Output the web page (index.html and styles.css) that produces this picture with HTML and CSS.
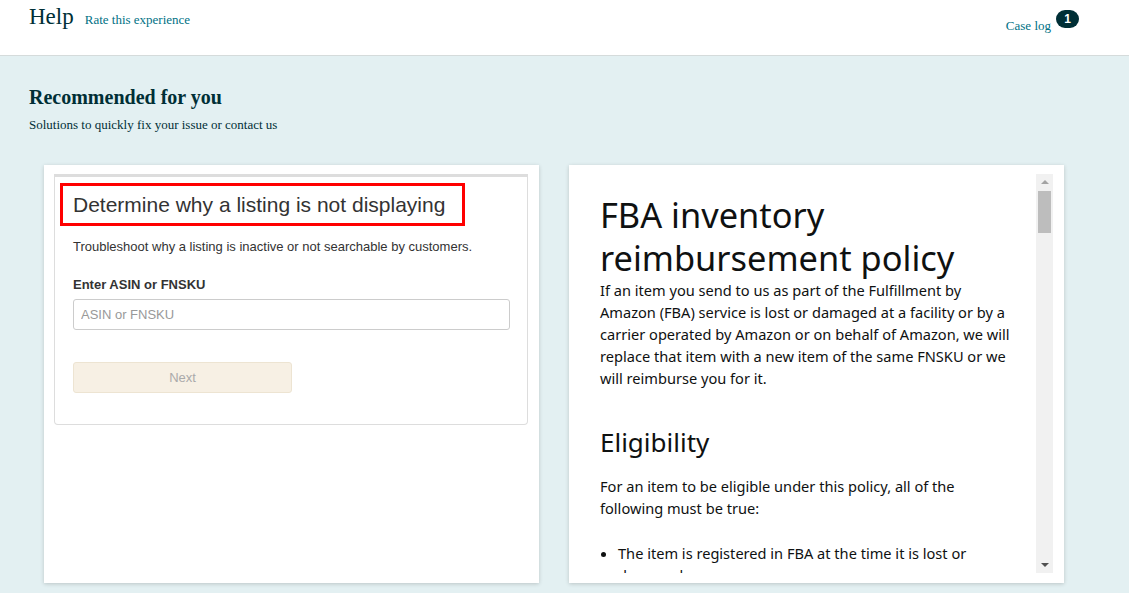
FILE: index.html
```html
<!DOCTYPE html>
<html>
<head>
<meta charset="utf-8">
<link rel="stylesheet" href="styles.css">
</head>
<body>
<header class="topbar">
  <div class="brand">
    <span class="help">Help</span>
    <a class="rate" href="#">Rate this experience</a>
  </div>
  <div class="caselog">
    <a class="caselink" href="#">Case log</a>
    <span class="badge">1</span>
  </div>
</header>
<main class="main">
  <h2 class="rec-title">Recommended for you</h2>
  <p class="rec-sub">Solutions to quickly fix your issue or contact us</p>
  <div class="cards">
    <section class="card">
      <div class="tool">
        <h3 class="tool-title">Determine why a listing is not displaying</h3>
        <p class="tool-desc">Troubleshoot why a listing is inactive or not searchable by customers.</p>
        <label class="tool-label">Enter ASIN or FNSKU</label>
        <input class="tool-input" type="text" placeholder="ASIN or FNSKU">
        <button class="tool-btn">Next</button>
      </div>
    </section>
    <section class="card card-doc">
      <div class="frame">
        <div class="doc">
          <h1 class="doc-title">FBA inventory reimbursement policy</h1>
          <p class="doc-p">If an item you send to us as part of the Fulfillment by Amazon (FBA) service is lost or damaged at a facility or by a carrier operated by Amazon or on behalf of Amazon, we will replace that item with a new item of the same FNSKU or we will reimburse you for it.</p>
          <h2 class="doc-h2">Eligibility</h2>
          <p class="doc-p">For an item to be eligible under this policy, all of the following must be true:</p>
          <ul class="doc-list">
            <li>The item is registered in FBA at the time it is lost or damaged.</li>
          </ul>
        </div>
        <div class="scrollbar">
          <span class="arrow up"></span>
          <span class="thumb"></span>
          <span class="track"></span>
          <span class="arrow down"></span>
        </div>
      </div>
    </section>
  </div>
</main>
</body>
</html>
```

FILE: styles.css
```css
html, body {
  margin: 0;
  padding: 0;
}
body {
  width: 1129px;
  height: 593px;
  overflow: hidden;
  background: #e3f0f2;
  font-family: "Liberation Serif", "Times New Roman", serif;
}
.topbar {
  height: 55px;
  background: #fff;
  border-bottom: 1px solid #d5dbdb;
  display: flex;
  justify-content: space-between;
  align-items: flex-start;
  padding: 0 50px 0 29px;
}
.brand {
  display: flex;
  align-items: baseline;
  gap: 11px;
  padding-top: 3px;
}
.help {
  font-size: 23px;
  color: #002f36;
  line-height: 28px;
}
.rate {
  font-size: 13px;
  color: #007185;
  text-decoration: none;
}
.caselog {
  display: flex;
  align-items: flex-start;
  gap: 5px;
  padding-top: 10px;
}
.caselink {
  font-size: 13px;
  color: #007185;
  text-decoration: none;
  margin-top: 8px;
}
.badge {
  background: #002f36;
  color: #fff;
  font-family: "Liberation Sans", Arial, sans-serif;
  font-weight: bold;
  font-size: 12px;
  line-height: 18px;
  height: 18px;
  min-width: 23px;
  border-radius: 9px;
  text-align: center;
}
.main {
  padding: 30px 0 0 29px;
}
.rec-title {
  margin: 0;
  font-size: 20px;
  line-height: 22px;
  font-weight: bold;
  color: #002f36;
}
.rec-sub {
  margin: 9px 0 0;
  font-size: 13px;
  line-height: 16px;
  color: #002f36;
}
.cards {
  display: flex;
  gap: 30px;
  margin: 32px 0 0 15px;
}
.card {
  width: 495px;
  height: 418px;
  background: #fff;
  box-shadow: 0 1px 4px rgba(0, 0, 0, 0.18);
  box-sizing: border-box;
  padding: 9px 11px 0 10px;
}
.tool {
  border: 1px solid #dddddd;
  border-top: 3px solid #dddddd;
  border-radius: 0 0 4px 4px;
  height: 251px;
  box-sizing: border-box;
  padding: 6px 18px 0 5px;
  font-family: "Liberation Sans", Arial, sans-serif;
  color: #333;
  display: flex;
  flex-direction: column;
  align-items: flex-start;
}
.tool-title {
  margin: 0;
  border: 3px solid #f00;
  font-weight: normal;
  font-size: 21px;
  line-height: 37px;
  padding: 0 17px 0 10px;
  color: #333;
}
.tool-desc {
  margin: 13px 0 0 13px;
  font-size: 13px;
  line-height: 16px;
}
.tool-label {
  margin: 22px 0 0 13px;
  font-size: 13px;
  font-weight: bold;
  line-height: 16px;
}
.tool-input {
  margin: 6px 0 0 13px;
  width: 437px;
  height: 31px;
  box-sizing: border-box;
  border: 1px solid #cccccc;
  border-radius: 3px;
  padding: 0 7px;
  font-family: "Liberation Sans", Arial, sans-serif;
  font-size: 13px;
  color: #333;
}
.tool-input::placeholder {
  color: #999;
}
.tool-btn {
  margin: 32px 0 0 13px;
  width: 219px;
  height: 31px;
  box-sizing: border-box;
  background: #f7f0e4;
  border: 1px solid #ede4d2;
  border-radius: 3px;
  font-family: "Liberation Sans", Arial, sans-serif;
  font-size: 13px;
  color: #aaa;
}
.frame {
  display: flex;
  height: 399px;
  overflow: hidden;
}
.doc {
  flex: 1;
  padding: 19px 26px 0 21px;
  font-family: "Noto Sans", "Open Sans", sans-serif;
  color: #0f1111;
  overflow: hidden;
}
.doc-title {
  margin: 0;
  font-weight: normal;
  font-size: 34.4px;
  line-height: 43px;
}
.doc-p {
  margin: 0;
  font-size: 14.6px;
  line-height: 22px;
}
.doc-h2 {
  margin: 37px 0 17px;
  font-weight: normal;
  font-size: 26px;
  line-height: 32px;
}
.doc-list {
  margin: 23px 0 0;
  padding-left: 18px;
  font-size: 14.6px;
  line-height: 22px;
}
.scrollbar {
  width: 17px;
  background: #f1f1f1;
  display: flex;
  flex-direction: column;
  align-items: center;
}
.arrow {
  width: 0;
  height: 0;
  border-left: 4px solid transparent;
  border-right: 4px solid transparent;
  margin: 6px 0;
}
.arrow.up {
  border-bottom: 4px solid #a3a3a3;
}
.arrow.down {
  border-top: 4px solid #505050;
}
.thumb {
  width: 13px;
  height: 42px;
  background: #bdbdbd;
  margin-top: 1px;
}
.track {
  flex: 1;
}
```
